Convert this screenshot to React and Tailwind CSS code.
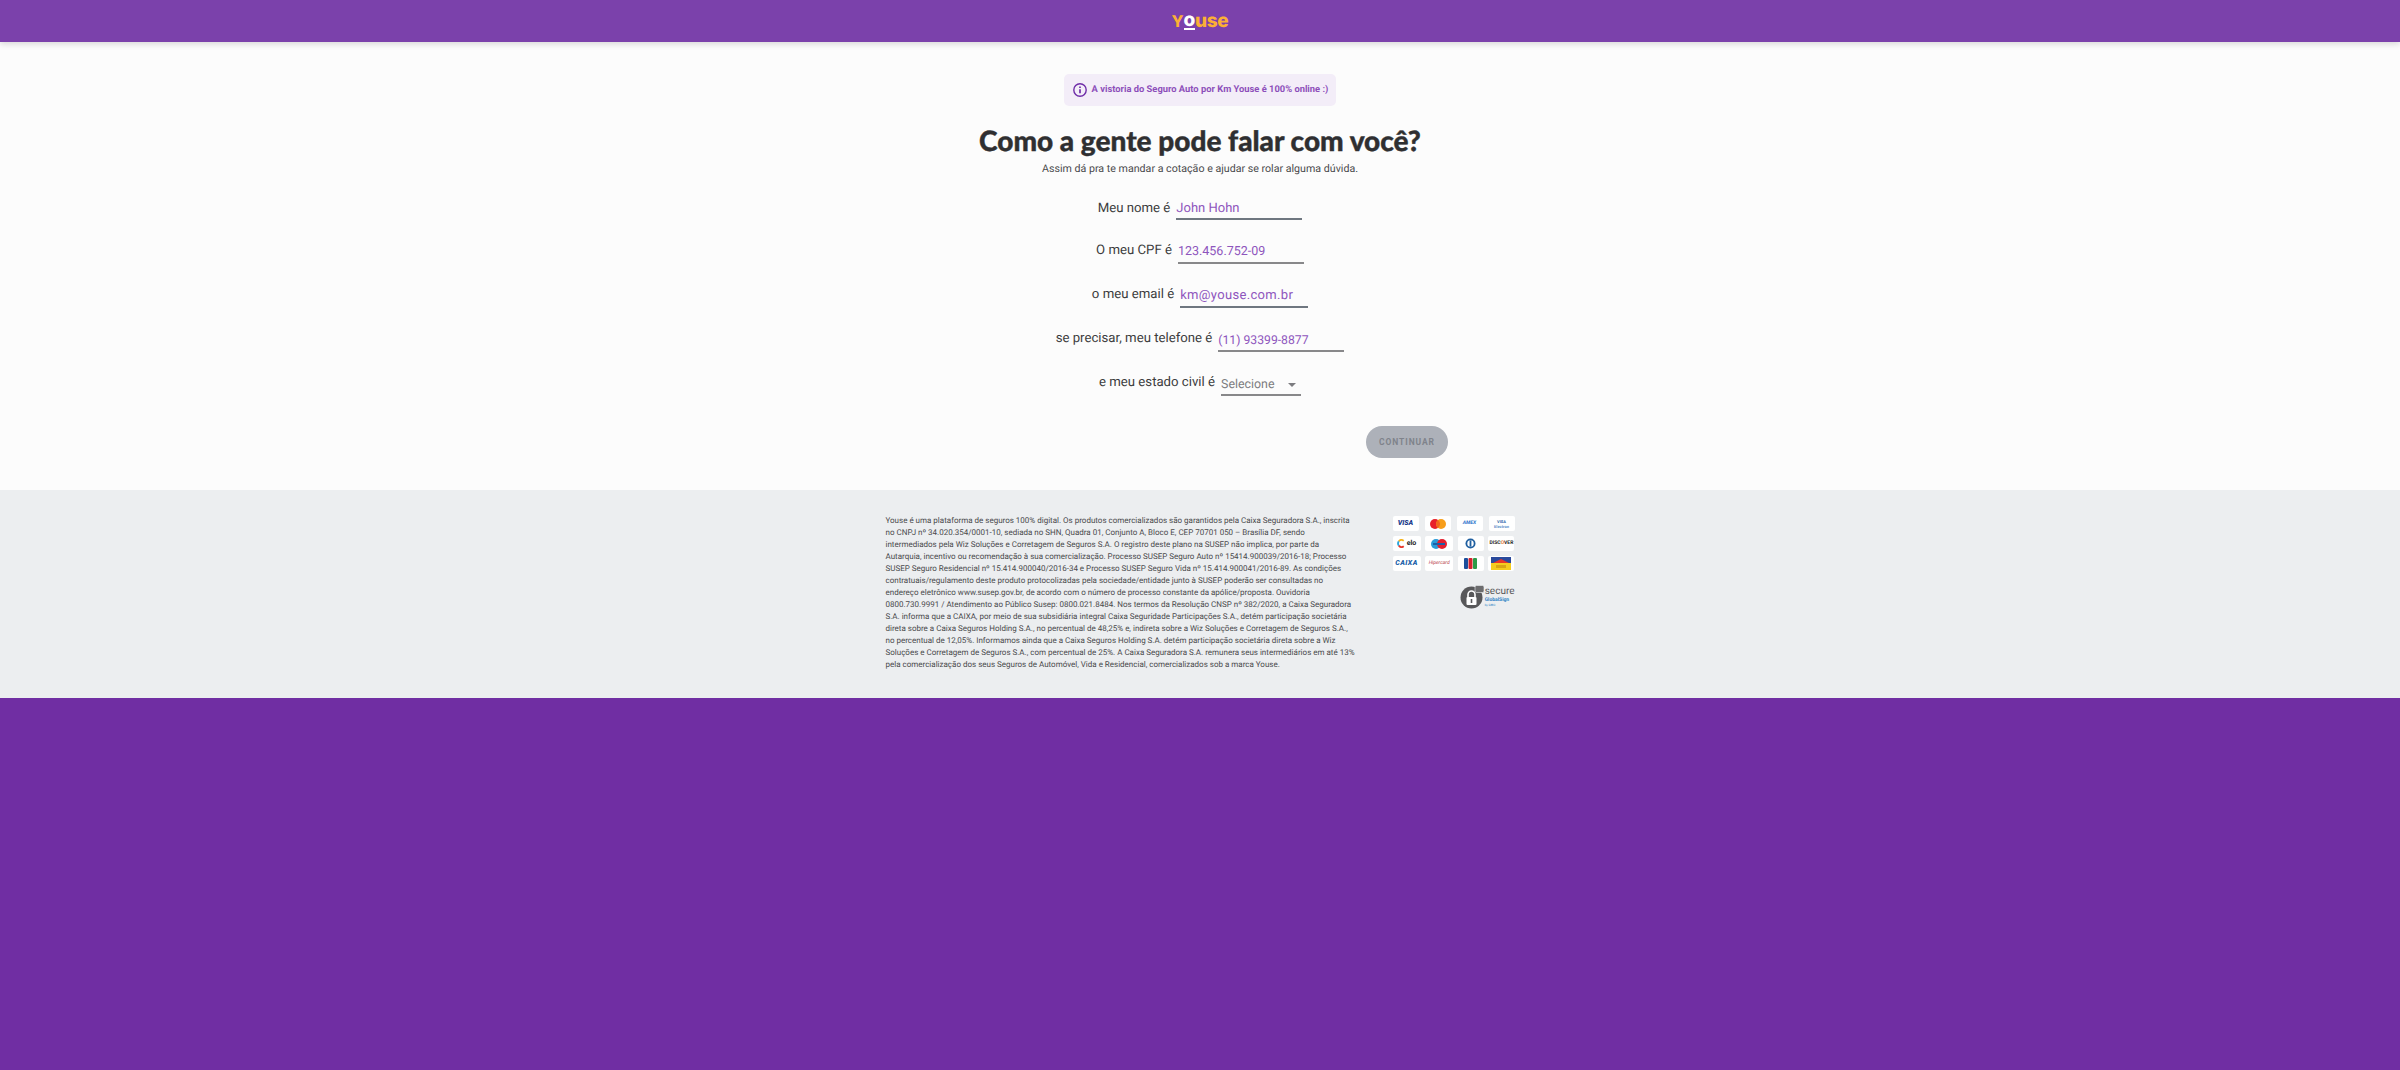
const roboto = { fontFamily: 'Roboto, sans-serif' }

function FormRow({ label, labelClass = 'pb-[3px]', children }) {
    return (
        <div className="flex h-[44px] items-end justify-center gap-[6px]">
            <span className={`text-[13.2px] leading-[20px] text-[#3c3c3e] ${labelClass}`}>{label}</span>
            {children}
        </div>
    )
}

function Card({ className = 'w-[26px]', children }) {
    return (
        <div className={`flex h-[15px] items-center justify-center overflow-hidden rounded-[2px] bg-white ${className}`}>
            {children}
        </div>
    )
}

function Cards() {
    return (
        <div className="mt-[1px] flex w-[122px] flex-col gap-[5px]">
            <div className="flex justify-between">
                <Card><span className="text-[7px] font-black italic text-[#1a3a8a]">VISA</span></Card>
                <Card>
                    <svg width="16" height="10" viewBox="0 0 16 10">
                        <circle cx="5" cy="5" r="5" fill="#e8202a" />
                        <circle cx="11" cy="5" r="5" fill="#f79e1b" />
                        <path d="M8 1a5 5 0 0 1 0 8a5 5 0 0 1 0-8z" fill="#f2661e" />
                    </svg>
                </Card>
                <Card><span className="text-[5px] font-black italic text-[#3f7fd0]">AMEX</span></Card>
                <Card>
                    <div className="flex flex-col items-center text-[4px] font-bold leading-[5px] text-[#2a5fa8]">
                        <span>VISA</span>
                        <span className="text-[#5b8cc8]">Electron</span>
                    </div>
                </Card>
            </div>
            <div className="flex justify-between">
                <Card className="w-[28px] gap-[1px]">
                    <svg width="9" height="9" viewBox="0 0 10 10" fill="none" strokeWidth="2">
                        <path d="M7.5 2A4 4 0 0 0 2 2.6" stroke="#f5b21a" />
                        <path d="M2 2.6a4 4 0 0 0 0 4.8" stroke="#2ba6dd" />
                        <path d="M2 7.4A4 4 0 0 0 7.5 8" stroke="#e8352a" />
                    </svg>
                    <span className="text-[7px] font-bold text-[#222]">elo</span>
                </Card>
                <Card className="w-[28px]">
                    <svg width="16" height="10" viewBox="0 0 16 10">
                        <circle cx="5" cy="5" r="5" fill="#2a9bd8" />
                        <circle cx="11" cy="5" r="5" fill="#e3202f" />
                        <rect x="2" y="4" width="12" height="2" fill="#1c5fa8" />
                    </svg>
                </Card>
                <Card>
                    <svg width="11" height="11" viewBox="0 0 11 11">
                        <circle cx="5.5" cy="5.5" r="5" fill="#1f5fa0" />
                        <circle cx="5.5" cy="5.5" r="3.2" fill="#fff" />
                        <rect x="4.6" y="2.4" width="1.8" height="6.2" fill="#1f5fa0" />
                    </svg>
                </Card>
                <Card><span className="text-[5px] font-bold text-[#222]">DISC<span className="text-[#e8761e]">O</span>VER</span></Card>
            </div>
            <div className="flex justify-between">
                <Card className="w-[28px]"><span className="text-[7px] font-black italic tracking-[0.5px] text-[#1a5fa8]">CAIXA</span></Card>
                <Card className="w-[28px]"><span className="text-[5px] italic text-[#b8434b]">Hipercard</span></Card>
                <Card>
                    <svg width="13" height="11" viewBox="0 0 13 11">
                        <rect width="4" height="11" rx="1" fill="#1d4f9c" />
                        <rect x="4.5" width="4" height="11" rx="1" fill="#d5222f" />
                        <rect x="9" width="4" height="11" rx="1" fill="#2c9a48" />
                    </svg>
                </Card>
                <Card>
                    <svg width="20" height="13" viewBox="0 0 20 13">
                        <rect width="20" height="6" fill="#2a4a9c" />
                        <path d="M2 6l8-4l8 4z" fill="#e8352a" />
                        <rect y="6" width="20" height="7" fill="#f5cc1e" />
                        <rect x="5" y="8" width="10" height="3" fill="#d9a514" />
                    </svg>
                </Card>
            </div>
            <div className="mt-[9px] flex items-center justify-end gap-[1px]">
                <svg width="24" height="24" viewBox="0 0 24 24">
                    <circle cx="11.5" cy="12.5" r="11" fill="#58585a" />
                    <rect x="15" y="0.5" width="9" height="7" rx="1.5" fill="#6c6c6e" stroke="#eceef0" strokeWidth="0.6" />
                    <path d="M8 12V9.5a3.5 3.5 0 0 1 7 0V12" fill="none" stroke="#fff" strokeWidth="1.6" />
                    <rect x="6.5" y="12" width="10" height="8" rx="1" fill="#fff" />
                    <rect x="10.7" y="14" width="1.6" height="4" fill="#58585a" />
                </svg>
                <div className="flex flex-col items-start">
                    <span className="text-[10px] leading-[10px] text-[#58585a]">secure</span>
                    <span className="text-[5px] font-bold leading-[6px] text-[#2a7fc4]">GlobalSign</span>
                    <span className="text-[3px] leading-[4px] text-[#2a7fc4]">by GMO</span>
                </div>
            </div>
        </div>
    )
}

export default function App() {
    return (
        <div className="flex min-h-screen flex-col bg-[#702ea3] [text-rendering:geometricPrecision]" style={roboto}>
            {/* Header */}
            <header className="relative z-10 flex h-[42px] justify-center bg-[#7b41ab] pt-[11px] shadow-[0_2px_6px_rgba(0,0,0,0.15)]">
                <div className="flex h-[19px] items-start text-[19px] font-extrabold leading-[19px] tracking-[-0.3px] text-[#fbb034]" style={{ fontFamily: 'Inter, sans-serif' }}>
                    <span className="mt-[1px] text-[16px] leading-[18px] tracking-[0px]">Y</span>
                    <span className="h-[19px] border-b-2 border-white leading-[17px] text-white">o</span>
                    <span>use</span>
                </div>
            </header>

            <main className="flex h-[448px] flex-col items-center bg-[#fcfcfc] pt-[32px]">
                <div className="flex h-[32px] items-center gap-[5px] rounded-[5px] bg-[#f3edf8] pl-[9px] pr-[8px]">
                    <svg width="14" height="14" viewBox="0 0 14 14" fill="none" stroke="#6f2da8" strokeWidth="1.4">
                        <circle cx="7" cy="7" r="6.2" />
                        <path d="M7 6.2v4M7 3.6v1.4" strokeWidth="1.7" />
                    </svg>
                    <span className="text-[9.35px] font-bold text-[#8d4fba]">A vistoria do Seguro Auto por Km Youse é 100% online :)</span>
                </div>

                <h1 className="mt-[16px] text-[28px] font-black leading-[36px] text-[#2f2f31] [-webkit-text-stroke:0.4px_#2f2f31]" style={{ fontFamily: 'Lato, sans-serif' }}>
                    Como a gente pode falar com você?
                </h1>
                <p className="mt-[1px] text-[10.67px] leading-[20px] text-[#4a4a4c]">
                    Assim dá pra te mandar a cotação e ajudar se rolar alguma dúvida.
                </p>

                <div className="-mt-[3px] w-full">
                    <FormRow label="Meu nome é" labelClass="pb-[1px]">
                        <div className="h-[24px] w-[126px] border-b-2 border-[#6f7780] text-[13px] leading-[26px] text-[#8e55bd]">John Hohn</div>
                    </FormRow>
                    <FormRow label="O meu CPF é">
                        <div className="h-[24px] w-[126px] border-b-2 border-[#88888a] text-[12.5px] leading-[24px] text-[#8e55bd]">123.456.752-09</div>
                    </FormRow>
                    <FormRow label="o meu email é">
                        <div className="h-[24px] w-[128px] border-b-2 border-[#6f7780] text-[13px] leading-[24px] tracking-[0.33px] text-[#8e55bd]">km@youse.com.br</div>
                    </FormRow>
                    <FormRow label="se precisar, meu telefone é">
                        <div className="h-[24px] w-[126px] border-b-2 border-[#88888a] text-[12.2px] leading-[24px] text-[#8e55bd]">(11) 93399-8877</div>
                    </FormRow>
                    <FormRow label="e meu estado civil é">
                        <div className="flex h-[24px] w-[80px] items-start justify-between border-b-2 border-[#88888a] pr-[5px] text-[12.4px] leading-[25px] text-[#7c7c80]">
                            <span>Selecione</span>
                            <span className="mt-[11px] h-0 w-0 border-x-[4px] border-t-[4px] border-x-transparent border-t-[#7c7c80]" />
                        </div>
                    </FormRow>
                </div>

                <div className="mt-[30px] flex w-[496px] justify-end">
                    <button className="h-[32px] w-[82px] rounded-[16px] bg-[#adb1b9] text-[8.5px] font-bold tracking-[0.9px] text-[#7f838b]">
                        CONTINUAR
                    </button>
                </div>
            </main>

            <footer className="flex h-[208px] justify-center gap-[37px] bg-[#eceef0] pt-[25px]">
                <p className="w-[470px] text-[8px] leading-[12px] text-[#4a4a4c]">
                    Youse é uma plataforma de seguros 100% digital. Os produtos comercializados são garantidos pela Caixa Seguradora S.A., inscrita no CNPJ nº 34.020.354/0001-10, sediada no SHN, Quadra 01, Conjunto A, Bloco E, CEP 70701 050 – Brasília DF, sendo intermediados pela Wiz Soluções e Corretagem de Seguros S.A. O registro deste plano na SUSEP não implica, por parte da Autarquia, incentivo ou recomendação à sua comercialização. Processo SUSEP Seguro Auto nº 15414.900039/2016-18; Processo SUSEP Seguro Residencial nº 15.414.900040/2016-34 e Processo SUSEP Seguro Vida nº 15.414.900041/2016-89. As condições contratuais/regulamento deste produto protocolizadas pela sociedade/entidade junto à SUSEP poderão ser consultadas no endereço eletrônico www.susep.gov.br, de acordo com o número de processo constante da apólice/proposta. Ouvidoria 0800.730.9991 / Atendimento ao Público Susep: 0800.021.8484. Nos termos da Resolução CNSP nº 382/2020, a Caixa Seguradora S.A. informa que a CAIXA, por meio de sua subsidiária integral Caixa Seguridade Participações S.A., detém participação societária direta sobre a Caixa Seguros Holding S.A., no percentual de 48,25% e, indireta sobre a Wiz Soluções e Corretagem de Seguros S.A., no percentual de 12,05%. Informamos ainda que a Caixa Seguros Holding S.A. detém participação societária direta sobre a Wiz Soluções e Corretagem de Seguros S.A., com percentual de 25%. A Caixa Seguradora S.A. remunera seus intermediários em até 13% pela comercialização dos seus Seguros de Automóvel, Vida e Residencial, comercializados sob a marca Youse.
                </p>
                <Cards />
            </footer>
        </div>
    )
}
